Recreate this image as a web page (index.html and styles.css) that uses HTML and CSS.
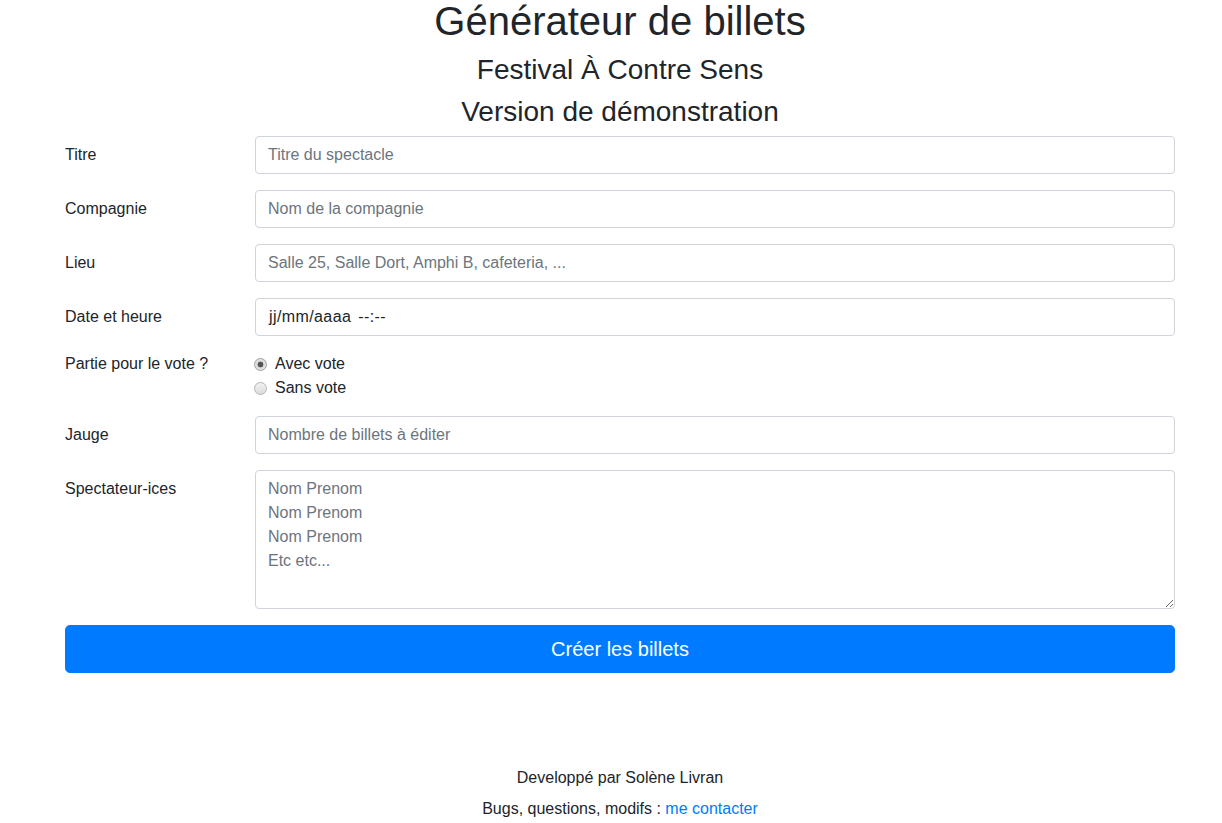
FILE: index.html
```html
<!DOCTYPE html>
<html lang="fr">
<head>
<meta charset="utf-8">
<title>Générateur de billets</title>
<link rel="stylesheet" href="styles.css">
</head>
<body>
<div class="container">
  <header class="head">
    <h1 class="title">Générateur de billets</h1>
    <h3 class="subtitle">Festival À Contre Sens</h3>
    <h3 class="subtitle">Version de démonstration</h3>
  </header>
  <form class="form">
    <div class="form-group">
      <label class="col-label" for="titre">Titre</label>
      <input class="form-control" id="titre" type="text" placeholder="Titre du spectacle">
    </div>
    <div class="form-group">
      <label class="col-label" for="compagnie">Compagnie</label>
      <input class="form-control" id="compagnie" type="text" placeholder="Nom de la compagnie">
    </div>
    <div class="form-group">
      <label class="col-label" for="lieu">Lieu</label>
      <input class="form-control" id="lieu" type="text" placeholder="Salle 25, Salle Dort, Amphi B, cafeteria, ...">
    </div>
    <div class="form-group">
      <label class="col-label" for="date">Date et heure</label>
      <div class="form-control date-control" id="date"><span class="date-part">jj/mm/aaaa</span><span class="time-part">--:--</span></div>
    </div>
    <fieldset class="form-group fieldset">
      <legend class="col-label no-pt">Partie pour le vote ?</legend>
      <div class="checks">
        <label class="form-check"><input class="radio" type="radio" name="vote" checked><span>Avec vote</span></label>
        <label class="form-check"><input class="radio" type="radio" name="vote"><span>Sans vote</span></label>
      </div>
    </fieldset>
    <div class="form-group">
      <label class="col-label" for="jauge">Jauge</label>
      <input class="form-control" id="jauge" type="text" placeholder="Nombre de billets à éditer">
    </div>
    <div class="form-group">
      <label class="col-label" for="spect">Spectateur-ices</label>
      <textarea class="form-control textarea" id="spect" placeholder="Nom Prenom&#10;Nom Prenom&#10;Nom Prenom&#10;Etc etc..."></textarea>
    </div>
    <button class="btn" type="button">Créer les billets</button>
  </form>
  <footer class="footer">
    <p class="foot-line">Developpé par Solène Livran</p>
    <p class="foot-line">Bugs, questions, modifs : <a class="link" href="#">me contacter</a></p>
  </footer>
</div>
</body>
</html>
```

FILE: styles.css
```css
html, body {
  margin: 0;
  padding: 0;
  background: #fff;
}
body {
  font-family: "Liberation Sans", Arial, sans-serif;
  font-size: 16px;
  line-height: 1.5;
  color: #212529;
}
.container {
  width: 1110px;
  margin-left: 65px;
}
.head {
  text-align: center;
}
.title {
  font-size: 40px;
  font-weight: 400;
  line-height: 1.2;
  margin: -3px 0 8px;
}
.subtitle {
  font-size: 28px;
  font-weight: 400;
  line-height: 1.2;
  margin: 0 0 8px;
}
.form {
  margin: 0;
}
.form-group {
  display: grid;
  grid-template-columns: 160px 1fr;
  column-gap: 30px;
  margin: 0 0 16px;
}
.fieldset {
  border: 0;
  padding: 0;
  min-width: 0;
}
.col-label {
  padding-top: 7px;
  padding-bottom: 7px;
  line-height: 24px;
  font-size: 16px;
}
.no-pt {
  padding: 0;
  float: left;
}
.form-control {
  display: block;
  box-sizing: border-box;
  width: 100%;
  height: 38px;
  padding: 6px 12px;
  font-family: inherit;
  font-size: 16px;
  line-height: 24px;
  color: #495057;
  background: #fff;
  border: 1px solid #ced4da;
  border-radius: 4px;
  margin: 0;
  outline: none;
}
.form-control::placeholder {
  color: #6c757d;
  opacity: 1;
}
.date-control {
  padding-left: 13px;
  color: #212529;
}
.date-part {
  letter-spacing: 0.4px;
}
.time-part {
  margin-left: 7px;
  letter-spacing: 0.4px;
}
.textarea {
  height: 139px;
  resize: vertical;
}
.checks {
  display: flex;
  flex-direction: column;
}
.form-check {
  display: flex;
  align-items: center;
  line-height: 24px;
  height: 24px;
  color: #212529;
}
.radio {
  -webkit-appearance: none;
  appearance: none;
  box-sizing: border-box;
  width: 13px;
  height: 13px;
  margin: 0 8px 0 -1px;
  border-radius: 50%;
  border: 1px solid #b4b4b4;
  background: linear-gradient(#f2f2f2, #dcdcdc);
  position: relative;
  flex: none;
}
.radio:checked {
  background: radial-gradient(circle, #555 0 2.6px, #d8d8d8 3.2px, #ebebeb 100%);
  border-color: #a0a0a0;
}
.btn {
  display: block;
  width: 100%;
  height: 48px;
  padding: 8px 16px;
  font-family: inherit;
  font-size: 20px;
  line-height: 30px;
  color: #fff;
  background: #007bff;
  border: 1px solid #007bff;
  border-radius: 4.8px;
  cursor: pointer;
}
.footer {
  text-align: center;
  margin-top: 93px;
}
.foot-line {
  margin: 0 0 7px;
}
.link {
  color: #007bff;
  text-decoration: none;
}
```
